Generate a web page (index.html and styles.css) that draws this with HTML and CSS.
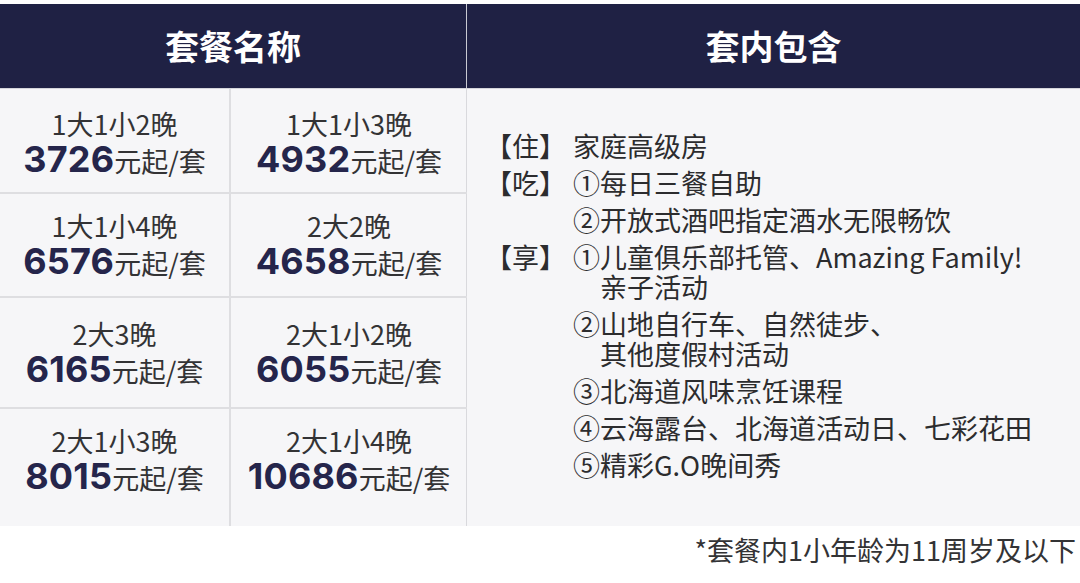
FILE: index.html
```html
<!DOCTYPE html>
<html lang="zh-CN">
<head>
<meta charset="utf-8">
<title>套餐</title>
<link rel="stylesheet" href="styles.css">
</head>
<body>
<div class="table">
  <div class="head">
    <div class="h h-left">套餐名称</div>
    <div class="h h-right">套内包含</div>
  </div>
  <div class="body">
    <div class="grid">
      <div class="cell first"><div class="lbl">1大1小2晚</div><div class="price"><span class="num">3726</span>元起/套</div></div>
      <div class="cell first c2"><div class="lbl">1大1小3晚</div><div class="price"><span class="num">4932</span>元起/套</div></div>
      <div class="cell"><div class="lbl">1大1小4晚</div><div class="price"><span class="num">6576</span>元起/套</div></div>
      <div class="cell c2"><div class="lbl">2大2晚</div><div class="price"><span class="num">4658</span>元起/套</div></div>
      <div class="cell"><div class="lbl">2大3晚</div><div class="price"><span class="num">6165</span>元起/套</div></div>
      <div class="cell c2"><div class="lbl">2大1小2晚</div><div class="price"><span class="num">6055</span>元起/套</div></div>
      <div class="cell last"><div class="lbl">2大1小3晚</div><div class="price"><span class="num">8015</span>元起/套</div></div>
      <div class="cell last c2"><div class="lbl">2大1小4晚</div><div class="price"><span class="num">10686</span>元起/套</div></div>
    </div>
    <div class="incl">
      <div class="list">
        <div class="group">
          <div class="tag">【住】</div>
          <div class="items"><div class="item"><span>家庭高级房</span></div></div>
        </div>
        <div class="group">
          <div class="tag">【吃】</div>
          <div class="items">
            <div class="item"><span class="n">①</span><span>每日三餐自助</span></div>
            <div class="item"><span class="n">②</span><span>开放式酒吧指定酒水无限畅饮</span></div>
          </div>
        </div>
        <div class="group">
          <div class="tag">【享】</div>
          <div class="items">
            <div class="item"><span class="n">①</span><span>儿童俱乐部托管、Amazing Family!<br>亲子活动</span></div>
            <div class="item"><span class="n">②</span><span>山地自行车、自然徒步、<br>其他度假村活动</span></div>
            <div class="item"><span class="n">③</span><span>北海道风味烹饪课程</span></div>
            <div class="item"><span class="n">④</span><span>云海露台、北海道活动日、七彩花田</span></div>
            <div class="item"><span class="n">⑤</span><span>精彩G.O晚间秀</span></div>
          </div>
        </div>
      </div>
    </div>
  </div>
</div>
<p class="note">*套餐内1小年龄为11周岁及以下</p>
</body>
</html>
```
FILE: styles.css
```css
* { box-sizing: border-box; }
html, body { margin: 0; padding: 0; background: #ffffff; }
body {
  width: 1080px;
  height: 583px;
  overflow: hidden;
  font-family: "Noto Sans CJK SC", "Noto Sans", sans-serif;
  color: #333335;
}
.table {
  margin-top: 4px;
  width: 1080px;
}
.head {
  display: flex;
  height: 85px;
  background: #1f2144;
  border-bottom: 1px solid #d4d5da;
}
.h {
  display: flex;
  align-items: center;
  justify-content: center;
  color: #ffffff;
  font-size: 34px;
  font-weight: 700;
  padding-bottom: 2px;
}
.h-left {
  width: 467px;
  border-right: 1px solid #c9cad3;
}
.h-right { flex: 1; }
.body {
  display: flex;
  background: #f6f6f8;
}
.grid {
  width: 467px;
  display: grid;
  grid-template-columns: 231px 236px;
  grid-template-rows: 105px 104px 111px 117px;
  border-right: 1px solid #d9d9dd;
}
.cell {
  display: flex;
  flex-direction: column;
  align-items: center;
  justify-content: center;
  border-bottom: 2px solid #dedee1;
  border-right: 2px solid #dedee1;
}
.cell.first { padding-top: 4px; }
.cell.c2 { border-right: none; }
.cell.last { border-bottom: none; padding-bottom: 15px; }
.lbl {
  font-size: 27px;
  line-height: 34px;
  color: #333335;
}
.price {
  font-size: 27px;
  line-height: 36px;
  color: #333335;
  white-space: nowrap;
}
.num {
  font-family: Inter, "Noto Sans", sans-serif;
  font-weight: 700;
  font-size: 36px;
  color: #25254b;
  letter-spacing: 0.2px;
}
.incl {
  flex: 1;
  display: flex;
  align-items: center;
  padding-left: 18px;
  padding-bottom: 4px;
}
.list {
  display: flex;
  flex-direction: column;
  gap: 7px;
  font-size: 27px;
  line-height: 30px;
  color: #2c2c2e;
}
.group {
  display: flex;
}
.tag {
  width: 88px;
  flex: none;
  white-space: nowrap;
}
.items {
  display: flex;
  flex-direction: column;
  gap: 7px;
}
.item {
  display: flex;
  white-space: nowrap;
}
.n { flex: none; }
.note {
  margin: 9px 4px 0 0;
  text-align: right;
  font-size: 27px;
  line-height: 30px;
  color: #333335;
}
```
